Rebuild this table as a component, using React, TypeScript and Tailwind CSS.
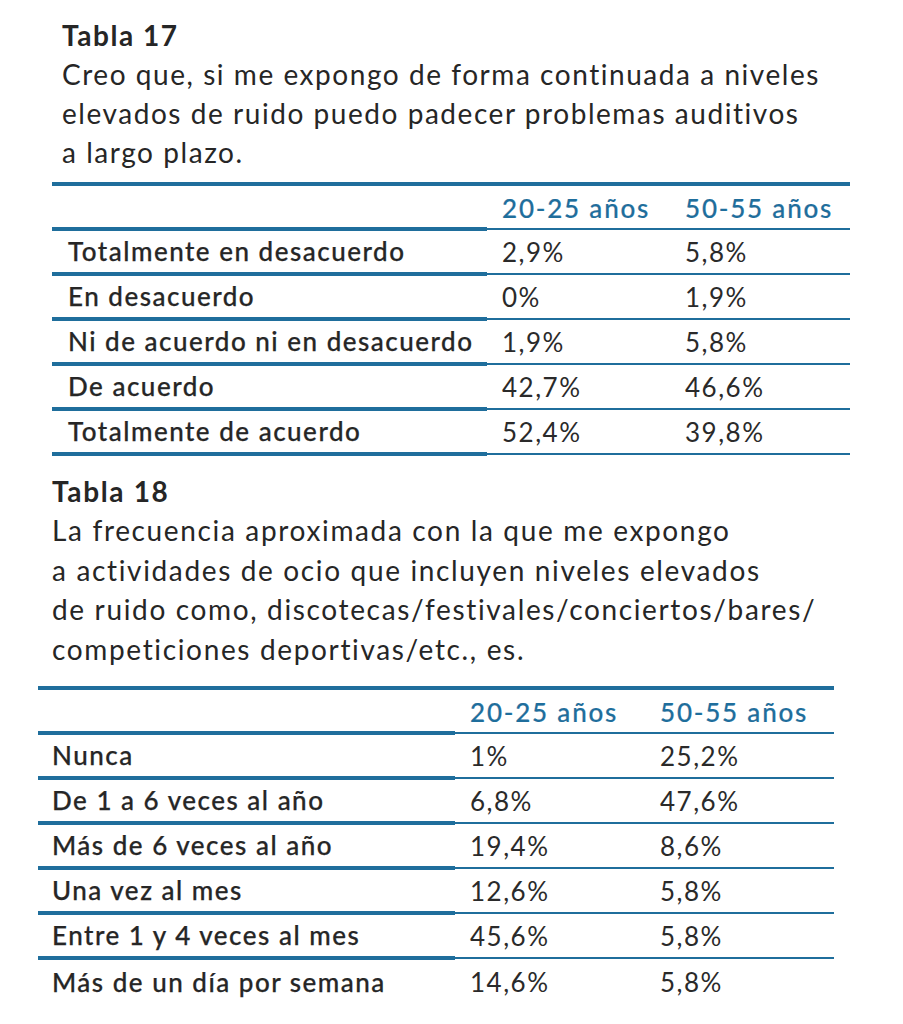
import React from "react";

const BLUE = "border-[#1f6e9c]";

type Row = [string, string, string];

function Table({ rows, widths, padL, last }: { rows: Row[]; widths: [number, number, number]; padL: number; last: boolean }) {
  const cols = `${widths[0]}px ${widths[1]}px ${widths[2]}px`;
  return (
    <div className="border-t-4 border-[#1f6e9c] text-[26px]" style={{ width: widths[0] + widths[1] + widths[2] }}>
      <div className="grid items-start" style={{ gridTemplateColumns: cols }}>
        <div className="h-[45px] border-b-4 border-[#1f6e9c]" />
        <div className="h-[44px] mb-px border-b-2 border-[#1f6e9c] flex items-center pt-[3px] pl-[15px] text-[#1f6e9c] font-medium tracking-[1.8px] [-webkit-text-stroke:0.2px_#1f6e9c]">20-25 años</div>
        <div className="h-[44px] mb-px border-b-2 border-[#1f6e9c] flex items-center pt-[3px] pl-[15px] text-[#1f6e9c] font-medium tracking-[1.8px] [-webkit-text-stroke:0.2px_#1f6e9c]">50-55 años</div>
        {rows.map((r, i) => {
          const isLast = last && i === rows.length - 1;
          return (
            <React.Fragment key={i}>
              <div
                className={`h-[45px] flex items-center font-medium text-[#262626] tracking-[1.5px] [-webkit-text-stroke:0.25px_#262626] ${isLast ? "" : "border-b-4 " + BLUE}`}
                style={{ paddingLeft: padL }}
              >
                {r[0]}
              </div>
              <div className={`h-[44px] mb-px flex items-center pl-[15px] text-[#2a2a2a] tracking-[1.5px] ${isLast ? "" : "border-b-2 " + BLUE}`}>{r[1]}</div>
              <div className={`h-[44px] mb-px flex items-center pl-[15px] text-[#2a2a2a] tracking-[1.5px] ${isLast ? "" : "border-b-2 " + BLUE}`}>{r[2]}</div>
            </React.Fragment>
          );
        })}
      </div>
    </div>
  );
}

export default function App() {
  const t17: Row[] = [
    ["Totalmente en desacuerdo", "2,9%", "5,8%"],
    ["En desacuerdo", "0%", "1,9%"],
    ["Ni de acuerdo ni en desacuerdo", "1,9%", "5,8%"],
    ["De acuerdo", "42,7%", "46,6%"],
    ["Totalmente de acuerdo", "52,4%", "39,8%"],
  ];
  const t18: Row[] = [
    ["Nunca", "1%", "25,2%"],
    ["De 1 a 6 veces al año", "6,8%", "47,6%"],
    ["Más de 6 veces al año", "19,4%", "8,6%"],
    ["Una vez al mes", "12,6%", "5,8%"],
    ["Entre 1 y 4 veces al mes", "45,6%", "5,8%"],
    ["Más de un día por semana", "14,6%", "5,8%"],
  ];
  return (
    <div className="w-[903px] h-[1024px] bg-white text-[#262626] overflow-hidden whitespace-nowrap" style={{ fontFamily: "Lato, 'Open Sans', sans-serif" }}>
      <div className="pt-[16px] pl-[62px] text-[28px] leading-[39px] tracking-[1.55px]">
        <div className="font-bold">Tabla 17</div>
        <div>
          Creo que, si me expongo de forma continuada a niveles
          <br />
          elevados de ruido puedo padecer problemas auditivos
          <br />a largo plazo.
        </div>
      </div>
      <div className="pl-[52px] mt-[10px]">
        <Table rows={t17} widths={[435, 183, 180]} padL={16} last={false} />
      </div>
      <div className="pl-[52px] mt-[16px] text-[28px] tracking-[1.65px]">
        <div className="font-bold leading-[39px]">Tabla 18</div>
        <div className="leading-[39.5px]">
          La frecuencia aproximada con la que me expongo
          <br />a actividades de ocio que incluyen niveles elevados
          <br />
          de ruido como, discotecas/festivales/conciertos/bares/
          <br />
          competiciones deportivas/etc., es.
        </div>
      </div>
      <div className="pl-[38px] mt-[17px]">
        <Table rows={t18} widths={[417, 190, 189]} padL={14} last={true} />
      </div>
    </div>
  );
}
